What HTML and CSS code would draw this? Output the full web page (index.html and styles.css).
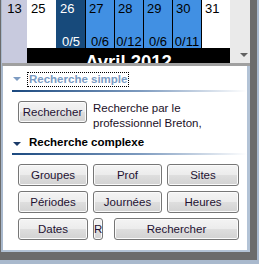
FILE: index.html
```html
<!DOCTYPE html>
<html lang="fr">
<head>
    <meta charset="UTF-8">
    <title>Planning</title>
    <link rel="stylesheet" href="styles.css">
</head>
<body>
    <div class="frame">
        <div class="win">
            <div class="cal">
                <div class="week">13</div>
                <div class="month">
                    <div class="days">
                        <div class="day off"><span class="num">25</span></div>
                        <div class="day sel"><span class="num">26</span><span class="count">0/5</span></div>
                        <div class="day open"><span class="num">27</span><span class="count">0/6</span></div>
                        <div class="day open"><span class="num">28</span><span class="count">0/12</span></div>
                        <div class="day open"><span class="num">29</span><span class="count">0/6</span></div>
                        <div class="day open"><span class="num">30</span><span class="count">0/11</span></div>
                        <div class="day off last"><span class="num">31</span></div>
                    </div>
                    <div class="month-name">Avril 2012</div>
                </div>
                <div class="scroll"><span class="arrow"></span></div>
            </div>
            <div class="split"></div>

            <div class="panel">
                <div class="sec-head faded">
                    <span class="caret"></span>
                    <span class="sec-title focus">Recherche simple</span>
                </div>
                <div class="simple-row">
                    <button class="btn b-search">Rechercher</button>
                    <p class="hint">Recherche par le professionnel Breton,</p>
                </div>

                <div class="sec-head">
                    <span class="caret"></span>
                    <span class="sec-title">Recherche complexe</span>
                </div>
                <div class="btn-grid">
                    <div class="btn-row">
                        <button class="btn b-a">Groupes</button>
                        <button class="btn b-b">Prof</button>
                        <button class="btn b-c">Sites</button>
                    </div>
                    <div class="btn-row">
                        <button class="btn b-a">Périodes</button>
                        <button class="btn b-b">Journées</button>
                        <button class="btn b-c">Heures</button>
                    </div>
                    <div class="btn-row">
                        <button class="btn b-a">Dates</button>
                        <button class="btn b-r">R</button>
                        <button class="btn b-long">Rechercher</button>
                    </div>
                </div>
            </div>
        </div>
    </div>
</body>
</html>
```

FILE: styles.css
```css
* {
    margin: 0;
    padding: 0;
    box-sizing: border-box;
}

body {
    font-family: 'Liberation Sans', Arial, sans-serif;
    font-size: 11.5px;
    color: #1b1026;
    background: #6b6b6b;
    overflow: hidden;
}

.frame {
    width: 259px;
    height: 264px;
    background: #6b6b6b;
    border-right: 2px solid #a9b9cd;
    border-bottom: 4px solid #a9b9cd;
}

.win {
    width: 249px;
    margin-left: 1px;
    border-left: 1px solid #a9b9cd;
}

/* calendar strip */
.cal {
    display: flex;
    height: 63px;
}

.week {
    width: 25px;
    background: #c8cade;
    font-size: 13px;
    line-height: 15px;
    padding-top: 1px;
    text-align: center;
    color: #000;
}

.month {
    width: 203px;
    display: flex;
    flex-direction: column;
}

.days {
    display: flex;
    height: 48px;
}

.day {
    width: 29px;
    display: flex;
    flex-direction: column;
    justify-content: space-between;
    border-left: 1px solid #000;
    font-size: 13px;
    color: #000;
}

.day.off {
    background: #fff;
}

.day.off:first-child {
    border-left-color: #fff;
}

.day.sel {
    background: #174a7b;
    border-left-color: #174a7b;
    color: #fff;
}

.day.open {
    background: #4190e3;
}

.num {
    line-height: 15px;
    padding: 1px 3px 0;
}

.count {
    line-height: 13px;
    text-align: center;
}

.month-name {
    height: 15px;
    overflow: hidden;
    background: #000;
    color: #fff;
    font-weight: bold;
    font-size: 18.5px;
    line-height: 20px;
    padding-top: 4px;
    text-align: center;
}

.scroll {
    width: 20px;
    background: #eaeaea;
    display: flex;
    align-items: flex-end;
    padding: 0 0 6px 10px;
}

.arrow {
    width: 0;
    height: 0;
    border-left: 4px solid transparent;
    border-right: 4px solid transparent;
    border-top: 4px solid #626262;
}

.split {
    height: 3px;
    background: #a0a0a0;
}

/* search panel */
.panel {
    width: 248px;
    background: #fff;
    border-left: 1px solid #a9b9cd;
    border-right: 3px solid #b3c3d6;
    border-bottom: 2px solid #b3c3d6;
    padding: 6px 0 10px;
}

.sec-head {
    display: flex;
    align-items: flex-start;
    margin-left: 9px;
    height: 20px;
    padding-bottom: 5px;
    background: linear-gradient(to right, #1b497f, #7f9cc0 55%, #ffffff) left bottom / 100% 2px no-repeat;
}

.caret {
    width: 0;
    height: 0;
    margin: 7px 6px 0 1px;
    border-left: 4px solid transparent;
    border-right: 4px solid transparent;
    border-top: 4px solid #1b3a68;
}

.sec-title {
    font-weight: bold;
    line-height: 13px;
    padding: 0 1px;
    border: 1px dotted transparent;
    color: #000;
}

.faded .caret {
    margin-top: 5px;
    border-top-color: #7e9cc2;
}

.faded .sec-title {
    color: #7b9bc3;
}

.sec-title.focus {
    border-color: #000;
}

.simple-row {
    display: flex;
    align-items: flex-start;
    margin: 9px 0 4px 15px;
}

.hint {
    margin-left: 6px;
    line-height: 15px;
    flex: 1;
}

.btn {
    height: 22px;
    font-family: inherit;
    font-size: 11.5px;
    color: #1e1232;
    border: 1px solid #767676;
    border-radius: 3px;
    background: linear-gradient(#f4f4f4, #ececec 48%, #dedede 52%, #d2d2d2);
    box-shadow: inset 0 0 0 1px #fbfbfb;
    overflow: hidden;
    white-space: nowrap;
}

.b-search {
    width: 69px;
}

.btn-grid {
    margin: 9px 0 0 15px;
    display: flex;
    flex-direction: column;
    gap: 5px;
}

.btn-row {
    display: flex;
    gap: 5px;
}

.b-a { width: 70px; }
.b-b { width: 69px; }
.b-c { width: 72px; }

.b-r {
    width: 10px;
    padding: 0;
    overflow: visible;
    text-align: center;
}

.b-long {
    width: 125px;
    margin-left: 6px;
}
```
